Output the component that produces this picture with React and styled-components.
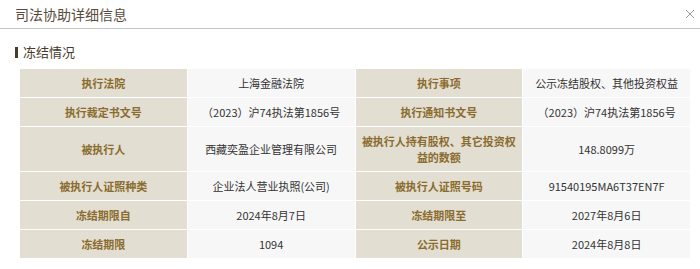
import React from 'react';
import styled, { createGlobalStyle } from 'styled-components';

const GlobalStyle = createGlobalStyle`
  body {
    margin: 0;
    background: #fff;
    font-family: "PingFang SC", "Noto Sans CJK SC", "Noto Sans", sans-serif;
  }
`;

const Header = styled.div`
  height: 28px;
  display: flex;
  align-items: center;
  justify-content: space-between;
  padding: 0 2px 0 15px;
  border-bottom: 1px solid #c4c4c4;
`;

const Title = styled.div`
  font-size: 14px;
  color: #5b4a3b;
  line-height: 20px;
`;

const Close = styled.button`
  width: 16px;
  height: 16px;
  padding: 0;
  border: none;
  background: none;
  display: flex;
  align-items: center;
  justify-content: center;
  cursor: pointer;
`;

const Body = styled.div`
  padding: 14px 10px 0 15px;
`;

const SectionTitle = styled.div`
  display: flex;
  align-items: center;
  gap: 5px;
  font-size: 13px;
  line-height: 18px;
  color: #4a3a2b;
  margin-bottom: 8px;

  &::before {
    content: "";
    width: 3px;
    height: 11px;
    background: #4a3a2b;
  }
`;

const Grid = styled.div`
  margin-left: 5px;
  width: 670px;
  display: grid;
  grid-template-columns: repeat(4, 1fr);
  gap: 1px;
  background: #fff;
`;

const Cell = styled.div`
  min-height: 16px;
  padding: 6px 6px;
  display: flex;
  align-items: center;
  justify-content: center;
  text-align: center;
  font-size: 11px;
  line-height: 16px;
  background: ${p => (p.$label ? '#e3ded2' : '#f7f7f7')};
  color: ${p => (p.$label ? '#8a6c2e' : '#333')};
  font-weight: ${p => (p.$label ? 600 : 400)};
`;

const rows = [
  ['执行法院', '上海金融法院', '执行事项', '公示冻结股权、其他投资权益'],
  ['执行裁定书文号', '（2023）沪74执法第1856号', '执行通知书文号', '（2023）沪74执法第1856号'],
  ['被执行人', '西藏奕盈企业管理有限公司', '被执行人持有股权、其它投资权益的数额', '148.8099万'],
  ['被执行人证照种类', '企业法人营业执照(公司)', '被执行人证照号码', '91540195MA6T37EN7F'],
  ['冻结期限自', '2024年8月7日', '冻结期限至', '2027年8月6日'],
  ['冻结期限', '1094', '公示日期', '2024年8月8日'],
];

export default function App() {
  return (
    <>
      <GlobalStyle />
      <Header>
        <Title>司法协助详细信息</Title>
        <Close aria-label="关闭">
          <svg width="10" height="10" viewBox="0 0 10 10">
            <path d="M1 1L9 9M9 1L1 9" stroke="#9a9a9a" strokeWidth="1" fill="none" />
          </svg>
        </Close>
      </Header>
      <Body>
        <SectionTitle>冻结情况</SectionTitle>
        <Grid>
          {rows.map(r =>
            r.map((text, i) => (
              <Cell key={r[0] + i} $label={i % 2 === 0}>
                {text}
              </Cell>
            ))
          )}
        </Grid>
      </Body>
    </>
  );
}
